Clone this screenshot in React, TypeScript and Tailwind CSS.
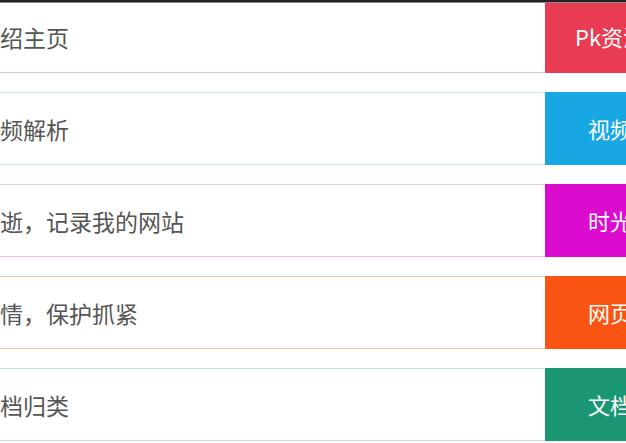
const rows = [
  { text: "介绍主页", label: "Pk资源导航", line: "border-[#eec3cc]", bg: "bg-[#e93c53]" },
  { text: "视频解析", label: "视频解析", line: "border-[#c4e6f1]", bg: "bg-[#17a8e3]" },
  { text: "流逝，记录我的网站", label: "时光记录", line: "border-[#f2c2ef]", bg: "bg-[#dc0bd0]" },
  { text: "热情，保护抓紧", label: "网页加密", line: "border-[#f0c6a6]", bg: "bg-[#fa5412]" },
  { text: "文档归类", label: "文档归类", line: "border-[#c9e2de]", bg: "bg-[#1b9673]" },
]

export default function App() {
  return (
    <div className="relative w-[626px] h-[443px] overflow-hidden bg-white font-['Noto_Sans_CJK_SC','Noto_Sans',sans-serif]">
      {/* top bar from the page header */}
      <div className="absolute top-0 left-0 right-0 h-[3px] bg-[#222] border-b border-[#888] z-10" />

      <div className="flex flex-col gap-[19px] ml-[-23px]">
        {rows.map((row) => (
          <div key={row.label} className="flex h-[73px] w-[742px] shrink-0">
            <div className={`w-[568px] shrink-0 flex items-center pt-[2px] border-y ${row.line} text-[23px] text-[#555] whitespace-nowrap`}>
              {row.text}
            </div>
            <div className={`w-[174px] shrink-0 flex items-center justify-center ${row.bg} text-[22px] text-white whitespace-nowrap`}>
              {row.label}
            </div>
          </div>
        ))}
      </div>
    </div>
  )
}
